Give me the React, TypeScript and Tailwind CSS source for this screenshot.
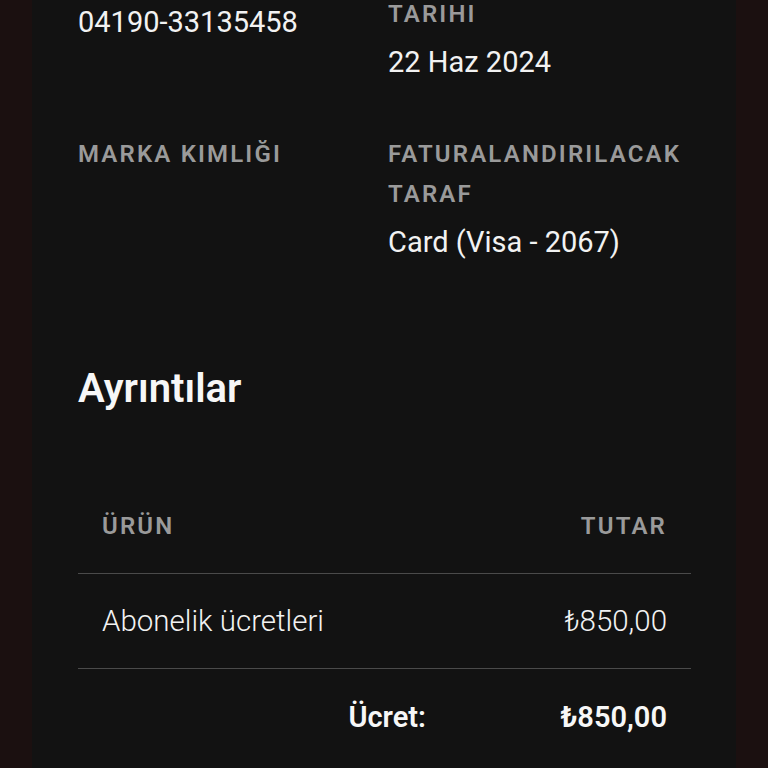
export default function App() {
  const label = "text-[24px] leading-[40px] font-semibold tracking-[0.09em] text-[#9a9a9a]";
  const value = "mt-2 text-[29px] leading-[40px] text-[#f2f2f2]";

  return (
    <div
      className="flex min-h-screen w-full bg-[#1b1010] overflow-hidden"
      style={{ fontFamily: "Roboto, 'Liberation Sans', sans-serif" }}
    >
      <div className="w-8 shrink-0 bg-[#1b1010]" />
      <div className="flex-1 bg-[#121212] pl-[46px] pr-[45px] pb-10">
        <div className="-mt-[46px]">
          <div className="grid grid-cols-[310px_1fr] gap-y-[52px]">
            <div>
              <div className={label}>FATURA NUMARASI</div>
              <div className={value}>04190-33135458</div>
            </div>
            <div>
              <div className={label}>FATURALANDIRMA TARIHI</div>
              <div className={value}>22 Haz 2024</div>
            </div>
            <div>
              <div className={label}>MARKA KIMLIĞI</div>
            </div>
            <div>
              <div className={label}>FATURALANDIRILACAK TARAF</div>
              <div className={value}>Card (Visa - 2067)</div>
            </div>
          </div>

          <h2 className="mt-[103px] text-[40px] leading-[48px] font-semibold text-[#f7f7f7]">
            Ayrıntılar
          </h2>

          <div className="mt-[65px]">
            <div className="flex h-[96px] items-center justify-between border-b border-[#4a4a4a] px-6">
              <span className={label}>ÜRÜN</span>
              <span className={label}>TUTAR</span>
            </div>
            <div className="flex h-[95px] items-center justify-between border-b border-[#4a4a4a] px-6 text-[29.5px] leading-[40px] font-light text-[#f2f2f2]">
              <span>Abonelik ücretleri</span>
              <span>₺850,00</span>
            </div>
            <div className="flex h-[95px] items-center justify-end pr-6 text-[29px] leading-[40px] font-semibold text-[#f7f7f7]">
              <span>Ücret:</span>
              <span className="w-[241px] text-right">₺850,00</span>
            </div>
          </div>
        </div>
      </div>
      <div className="w-8 shrink-0 bg-[#1b1010]" />
    </div>
  );
}
